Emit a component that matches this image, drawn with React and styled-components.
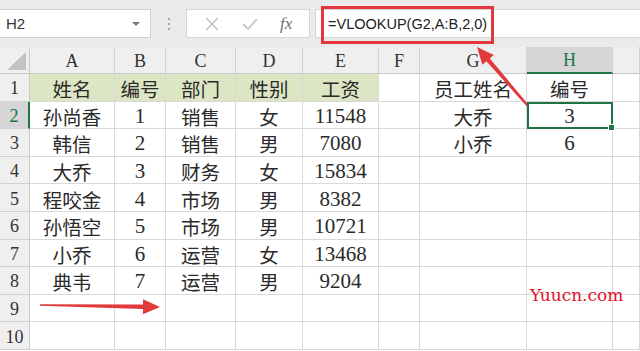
import React from 'react';
import styled, { createGlobalStyle } from 'styled-components';

const GlobalStyle = createGlobalStyle`
  html, body {
    margin: 0;
    padding: 0;
    background: #ffffff;
    overflow: hidden;
  }
`;

const Page = styled.div`
  position: relative;
  width: 640px;
  height: 351px;
  overflow: hidden;
  background: #ffffff;
  font-family: "Liberation Serif", "Noto Sans CJK SC", serif;
`;

const FormulaBar = styled.div`
  display: flex;
  align-items: flex-start;
  height: 47px;
  box-sizing: border-box;
  padding-top: 9px;
  background: #ebebeb;
`;

const NameBox = styled.div`
  display: flex;
  align-items: center;
  justify-content: space-between;
  width: 151px;
  height: 29px;
  box-sizing: border-box;
  padding: 0 6px 0 6px;
  background: #ffffff;
  border: 1px solid #cfcfcf;
  border-left: none;
  font-family: "Liberation Sans", sans-serif;
  font-size: 15px;
  color: #333;
`;

const Caret = styled.span`
  width: 0;
  height: 0;
  margin-right: 4px;
  border-left: 4px solid transparent;
  border-right: 4px solid transparent;
  border-top: 4px solid #777;
`;

const Grip = styled.div`
  display: flex;
  flex-direction: column;
  justify-content: center;
  gap: 3px;
  width: 35px;
  height: 29px;
  align-items: center;

  span {
    width: 2px;
    height: 2px;
    background: #a8a8a8;
  }
`;

const FormulaButtons = styled.div`
  display: flex;
  align-items: center;
  justify-content: space-around;
  width: 124px;
  height: 29px;
  box-sizing: border-box;
  background: #ffffff;
  border: 1px solid #d6d6d6;
  padding: 0 6px;
`;

const Fx = styled.span`
  font-family: "Liberation Serif", serif;
  font-style: italic;
  font-size: 17px;
  color: #6f6f6f;
`;

const FormulaInput = styled.div`
  flex: 1;
  height: 29px;
  margin-left: 5px;
  box-sizing: border-box;
  padding-left: 12px;
  display: flex;
  align-items: center;
  background: #ffffff;
  border: 1px solid #d6d6d6;
  border-right: none;
  font-family: "Liberation Sans", sans-serif;
  font-size: 14.5px;
  color: #222;
`;

const Sheet = styled.div`
  display: grid;
  grid-template-columns: 30px 85px 51px 70px 67px 76px 41px 107px 86px 27px;
  grid-template-rows: 27px repeat(10, 27.6px);
`;

const Corner = styled.div`
  position: relative;
  background: #efefef;
  border-right: 1px solid #c9c9c9;
  border-bottom: 1px solid #c9c9c9;

  &::after {
    content: '';
    position: absolute;
    right: 3px;
    bottom: 3px;
    width: 0;
    height: 0;
    border-left: 19px solid transparent;
    border-bottom: 18px solid #c2c2c2;
  }
`;

const ColHeader = styled.div`
  display: flex;
  align-items: center;
  justify-content: center;
  box-sizing: border-box;
  background: ${p => (p.$active ? '#d6d6d6' : '#efefef')};
  border-right: 1px solid #d0d0d0;
  border-bottom: ${p => (p.$active ? '2px solid #217346' : '1px solid #c9c9c9')};
  font-size: 18px;
  color: ${p => (p.$active ? '#217346' : '#333')};
  padding-top: 2px;
`;

const RowHeader = styled.div`
  display: flex;
  align-items: center;
  justify-content: center;
  box-sizing: border-box;
  background: ${p => (p.$active ? '#d6d6d6' : '#efefef')};
  border-right: ${p => (p.$active ? '2px solid #217346' : '1px solid #c9c9c9')};
  border-bottom: 1px solid #d0d0d0;
  font-size: 18px;
  color: ${p => (p.$active ? '#217346' : '#333')};
  padding-top: 3px;
`;

const Cell = styled.div`
  position: relative;
  display: flex;
  align-items: center;
  justify-content: center;
  box-sizing: border-box;
  white-space: nowrap;
  background: ${p => (p.$fill ? '#dce6c4' : '#ffffff')};
  border-right: 1px solid #d9d9d9;
  border-bottom: 1px solid #d9d9d9;
  font-family: "Liberation Serif", "Noto Sans CJK SC", serif;
  font-size: ${p => (p.$num ? '21px' : '19.5px')};
  color: #2a2a2a;
  padding-top: 3px;
  ${p => p.$selected && `
    outline: 2px solid #217346;
    outline-offset: -2px;
    z-index: 1;
    &::after {
      content: '';
      position: absolute;
      right: -3px;
      bottom: -3px;
      width: 5px;
      height: 5px;
      background: #217346;
      border: 1px solid #fff;
    }
  `}
`;

const Overlay = styled.svg`
  position: absolute;
  left: 0;
  top: 0;
  pointer-events: none;
`;

const Watermark = styled.div`
  position: absolute;
  left: 530px;
  top: 285px;
  font-family: "DejaVu Serif", serif;
  font-size: 17px;
  color: #e3122e;
`;

const columns = ['A', 'B', 'C', 'D', 'E', 'F', 'G', 'H', ''];

const rows = [
  ['姓名', '编号', '部门', '性别', '工资', '', '员工姓名', '编号', ''],
  ['孙尚香', '1', '销售', '女', '11548', '', '大乔', '3', ''],
  ['韩信', '2', '销售', '男', '7080', '', '小乔', '6', ''],
  ['大乔', '3', '财务', '女', '15834', '', '', '', ''],
  ['程咬金', '4', '市场', '男', '8382', '', '', '', ''],
  ['孙悟空', '5', '市场', '男', '10721', '', '', '', ''],
  ['小乔', '6', '运营', '女', '13468', '', '', '', ''],
  ['典韦', '7', '运营', '男', '9204', '', '', '', ''],
  ['', '', '', '', '', '', '', '', ''],
  ['', '', '', '', '', '', '', '', ''],
];

function arrowPoints(tail, tip, tailW, shaftW, headLen, headW) {
  const dx = tip[0] - tail[0];
  const dy = tip[1] - tail[1];
  const len = Math.hypot(dx, dy);
  const ux = dx / len;
  const uy = dy / len;
  const nx = -uy;
  const ny = ux;
  const bx = tip[0] - ux * headLen;
  const by = tip[1] - uy * headLen;
  const p = (x, y, w) => [x + nx * w / 2, y + ny * w / 2];
  const m = (x, y, w) => [x - nx * w / 2, y - ny * w / 2];
  const pts = [
    p(tail[0], tail[1], tailW),
    p(bx, by, shaftW),
    p(bx, by, headW),
    tip,
    m(bx, by, headW),
    m(bx, by, shaftW),
    m(tail[0], tail[1], tailW),
  ];
  return pts.map(([x, y]) => `${x.toFixed(1)},${y.toFixed(1)}`).join(' ');
}

const isNum = v => /^\d+$/.test(v);

export default function App() {
  return (
    <Page>
      <GlobalStyle />
      <FormulaBar>
        <NameBox>
          H2
          <Caret />
        </NameBox>
        <Grip>
          <span />
          <span />
          <span />
        </Grip>
        <FormulaButtons>
          <svg width="16" height="16" viewBox="0 0 16 16">
            <path d="M2 2 L14 14 M14 2 L2 14" stroke="#c4c4c4" strokeWidth="1.6" fill="none" />
          </svg>
          <svg width="18" height="16" viewBox="0 0 18 16">
            <path d="M2 8 L7 13 L16 3" stroke="#c4c4c4" strokeWidth="1.8" fill="none" />
          </svg>
          <Fx>fx</Fx>
        </FormulaButtons>
        <FormulaInput>=VLOOKUP(G2,A:B,2,0)</FormulaInput>
      </FormulaBar>

      <Sheet>
        <Corner />
        {columns.map((c, i) => (
          <ColHeader key={i} $active={c === 'H'}>{c}</ColHeader>
        ))}
        {rows.map((row, r) => (
          <React.Fragment key={r}>
            <RowHeader $active={r === 1}>{r + 1}</RowHeader>
            {row.map((v, c) => (
              <Cell
                key={c}
                $fill={r === 0 && c < 5}
                $num={isNum(v)}
                $selected={r === 1 && c === 7}
              >
                {v}
              </Cell>
            ))}
          </React.Fragment>
        ))}
      </Sheet>

      <Overlay width="640" height="351" viewBox="0 0 640 351">
        <rect x="322.5" y="7.5" width="170" height="35" fill="none" stroke="#e3373d" strokeWidth="3" />
        <polygon points={arrowPoints([541, 121], [477, 47], 1.5, 4.5, 17, 15)} fill="#e03a3a" />
        <polygon points={arrowPoints([40, 305], [160, 307], 1.5, 4.5, 17, 15)} fill="#e03a3a" />
      </Overlay>

      <Watermark>Yuucn.com</Watermark>
    </Page>
  );
}
